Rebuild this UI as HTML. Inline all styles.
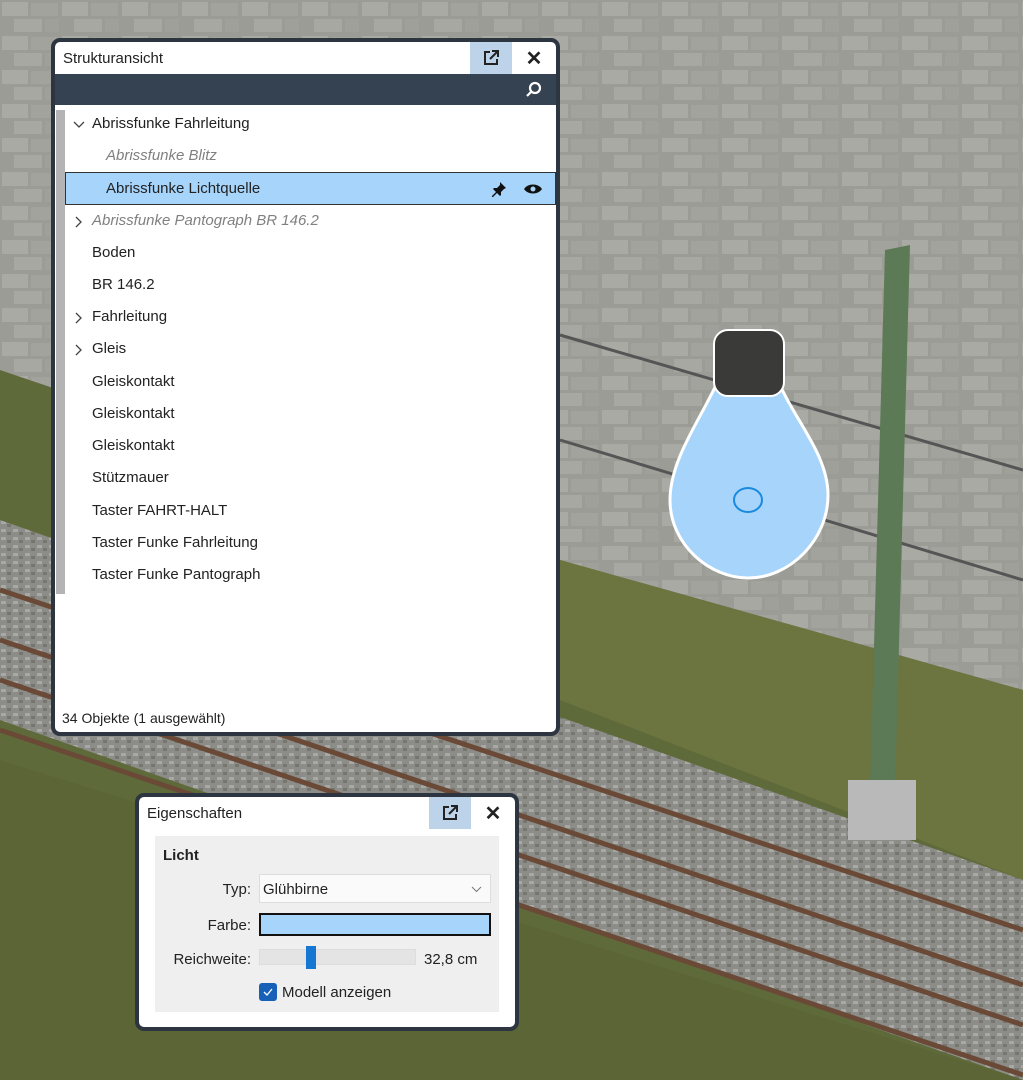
<!DOCTYPE html><html><head><meta charset="utf-8"><style>
*{margin:0;padding:0;box-sizing:border-box}
body{width:1023px;height:1080px;overflow:hidden;position:relative;font-family:"Liberation Sans",sans-serif;background:#8a8a80}
.p{position:absolute;background:#fff;border:4px solid #2c3540;border-radius:9px;overflow:hidden}
.hd{height:32px;position:relative;font-size:15px;color:#222;padding:8px 8px}
.btn{position:absolute;top:0;width:42px;height:32px;display:flex;align-items:center;justify-content:center}
.row{position:absolute;left:10px;right:0;height:32px;font-size:15px;color:#222;line-height:32px}
.it{font-style:italic;color:#808080}
.chev{position:absolute;left:8px;top:11px}
</style></head><body>
<svg width="1023" height="1080" style="position:absolute;left:0;top:0">
<defs><pattern id="st" width="60" height="34" patternUnits="userSpaceOnUse"><rect width="60" height="34" fill="#9c9c96"/><rect x="2" y="2" width="26" height="14" fill="#aaaaa4"/><rect x="31" y="3" width="27" height="13" fill="#a3a39d"/><rect x="14" y="19" width="28" height="13" fill="#a8a8a2"/><rect x="45" y="19" width="14" height="13" fill="#a0a09a"/></pattern>
<pattern id="gr" width="12" height="8" patternUnits="userSpaceOnUse"><rect width="12" height="8" fill="#8c8c88"/><rect x="1" y="1" width="5" height="3" fill="#a8a8a4"/><rect x="7" y="4" width="4" height="3" fill="#76766f"/></pattern></defs>
<rect width="1023" height="1080" fill="#5f6a3a"/>
<polygon points="0,0 1023,0 1023,690 560,560 0,370" fill="url(#st)"/>
<polygon points="560,560 1023,690 1023,880 560,700" fill="#6c7440"/>
<polygon points="0,520 1023,880 1023,1080 0,720" fill="url(#gr)"/>
<polygon points="0,760 1023,1080 0,1080" fill="#5c6535"/>
<g stroke="#6a4a36" stroke-width="5"><line x1="0" y1="590" x2="1023" y2="930"/><line x1="0" y1="640" x2="1023" y2="985"/><line x1="0" y1="680" x2="1023" y2="1025"/><line x1="0" y1="730" x2="1023" y2="1075"/></g>
<g stroke="#555" stroke-width="3"><line x1="560" y1="335" x2="1023" y2="470"/><line x1="560" y1="440" x2="1023" y2="580"/></g>
<polygon points="885,250 910,245 895,790 870,790" fill="#5c7a55"/>
<rect x="848" y="780" width="68" height="60" fill="#b9b9b9"/>
<path d="M716,385 C700,420 670,460 670,500 C670,545 710,578 748,578 C790,578 828,540 828,495 C828,455 795,420 780,385 Z" fill="#a6d4fb" stroke="#fff" stroke-width="3"/>
<rect x="714" y="330" width="70" height="66" rx="14" fill="#3a3a38" stroke="#fff" stroke-width="2"/>
<ellipse cx="748" cy="500" rx="14" ry="12" fill="none" stroke="#1a8ae0" stroke-width="2"/>
</svg>

<div class="p" style="left:51px;top:38px;width:509px;height:698px">
<div class="hd">Strukturansicht
<div class="btn" style="left:415px;background:#bcd3ea"><svg width="18" height="18" viewBox="0 0 18 18" fill="none" stroke="#222" stroke-width="2"><path d="M8 3H3v12h12v-5"/><path d="M10 2h6v6M16 2L8 10"/></svg></div>
<div class="btn" style="left:458px;font-size:20px;font-weight:bold">✕</div></div>
<div style="height:31px;background:#344252;position:relative"><svg style="position:absolute;right:14px;top:7px" width="17" height="17" viewBox="0 0 17 17" fill="none" stroke="#fff" stroke-width="2.2"><circle cx="10" cy="7" r="5"/><path d="M6.5 10.5L2 15"/></svg></div>
<div style="position:absolute;left:1px;top:68px;width:9px;height:484px;background:#b4b4b4"></div>
<div style="position:absolute;left:0;right:0;top:66px">
<div class="row" style="top:0"><svg class="chev" width="12" height="10" viewBox="0 0 12 10" fill="none" stroke="#444" stroke-width="1.3"><path d="M1 3l5 5 5-5"/></svg><span style="padding-left:27px">Abrissfunke Fahrleitung</span></div>
<div class="row it" style="top:32px;padding-left:41px">Abrissfunke Blitz</div>
<div class="row" style="top:64px;height:33px;background:#a6d4fb;border:1px solid #333;padding-left:40px">Abrissfunke Lichtquelle<svg style="position:absolute;right:48px;top:8px" width="16" height="16" viewBox="0 0 16 16"><path d="M9 1l6 6-2 1-3 3 0 3-1 1-3-3-4 4-1 0 0-1 4-4-3-3 1-1 3 0 3-3z" fill="#111"/></svg><svg style="position:absolute;right:12px;top:10px" width="20" height="12" viewBox="0 0 20 12"><path d="M1 6C5 0 15 0 19 6C15 12 5 12 1 6Z" fill="#111"/><circle cx="10" cy="6" r="2.5" fill="#a6d4fb"/></svg></div>
<div class="row it" style="top:97px"><svg class="chev" width="10" height="12" viewBox="0 0 10 12" fill="none" stroke="#444" stroke-width="1.3"><path d="M3 1l5 5-5 5"/></svg><span style="padding-left:27px">Abrissfunke Pantograph BR 146.2</span></div>
<div class="row" style="top:129px;padding-left:27px">Boden</div>
<div class="row" style="top:161px;padding-left:27px">BR 146.2</div>
<div class="row" style="top:193px"><svg class="chev" width="10" height="12" viewBox="0 0 10 12" fill="none" stroke="#444" stroke-width="1.3"><path d="M3 1l5 5-5 5"/></svg><span style="padding-left:27px">Fahrleitung</span></div>
<div class="row" style="top:225px"><svg class="chev" width="10" height="12" viewBox="0 0 10 12" fill="none" stroke="#444" stroke-width="1.3"><path d="M3 1l5 5-5 5"/></svg><span style="padding-left:27px">Gleis</span></div>
<div class="row" style="top:258px;padding-left:27px">Gleiskontakt</div>
<div class="row" style="top:290px;padding-left:27px">Gleiskontakt</div>
<div class="row" style="top:322px;padding-left:27px">Gleiskontakt</div>
<div class="row" style="top:354px;padding-left:27px">Stützmauer</div>
<div class="row" style="top:387px;padding-left:27px">Taster FAHRT-HALT</div>
<div class="row" style="top:419px;padding-left:27px">Taster Funke Fahrleitung</div>
<div class="row" style="top:451px;padding-left:27px">Taster Funke Pantograph</div>
</div>
<div style="position:absolute;left:7px;top:668px;font-size:14px;color:#222">34 Objekte (1 ausgewählt)</div>
</div>

<div class="p" style="left:135px;top:793px;width:384px;height:238px">
<div class="hd">Eigenschaften
<div class="btn" style="left:290px;background:#bcd3ea"><svg width="18" height="18" viewBox="0 0 18 18" fill="none" stroke="#222" stroke-width="2"><path d="M8 3H3v12h12v-5"/><path d="M10 2h6v6M16 2L8 10"/></svg></div>
<div class="btn" style="left:333px;font-size:20px;font-weight:bold">✕</div></div>
<div style="position:absolute;left:16px;top:39px;width:344px;height:176px;background:#efefef;font-size:15px;color:#222">
<div style="position:absolute;left:8px;top:11px;font-weight:bold">Licht</div>
<div style="position:absolute;right:248px;top:45px">Typ:</div>
<div style="position:absolute;left:104px;top:38px;width:232px;height:29px;background:#fafafa;border:1px solid #ddd;padding:6px 3px">Glühbirne<svg style="position:absolute;right:8px;top:11px" width="11" height="7" viewBox="0 0 11 7" fill="none" stroke="#777" stroke-width="1"><path d="M1 1l4.5 4.5L10 1"/></svg></div>
<div style="position:absolute;right:248px;top:81px">Farbe:</div>
<div style="position:absolute;left:104px;top:77px;width:232px;height:23px;background:#a6d4fb;border:2px solid #111"></div>
<div style="position:absolute;right:248px;top:115px">Reichweite:</div>
<div style="position:absolute;left:104px;top:113px;width:157px;height:16px;background:#e4e4e4;border:1px solid #ddd"></div>
<div style="position:absolute;left:151px;top:110px;width:10px;height:23px;background:#1677d2"></div>
<div style="position:absolute;left:269px;top:115px">32,8 cm</div>
<div style="position:absolute;left:104px;top:147px;width:18px;height:18px;background:#1660b8;border-radius:3px"><svg width="18" height="18" viewBox="0 0 18 18" fill="none" stroke="#fff" stroke-width="1.3"><path d="M5 9l3 3 5-6"/></svg></div>
<div style="position:absolute;left:127px;top:148px">Modell anzeigen</div>
</div></div>
</body></html>
